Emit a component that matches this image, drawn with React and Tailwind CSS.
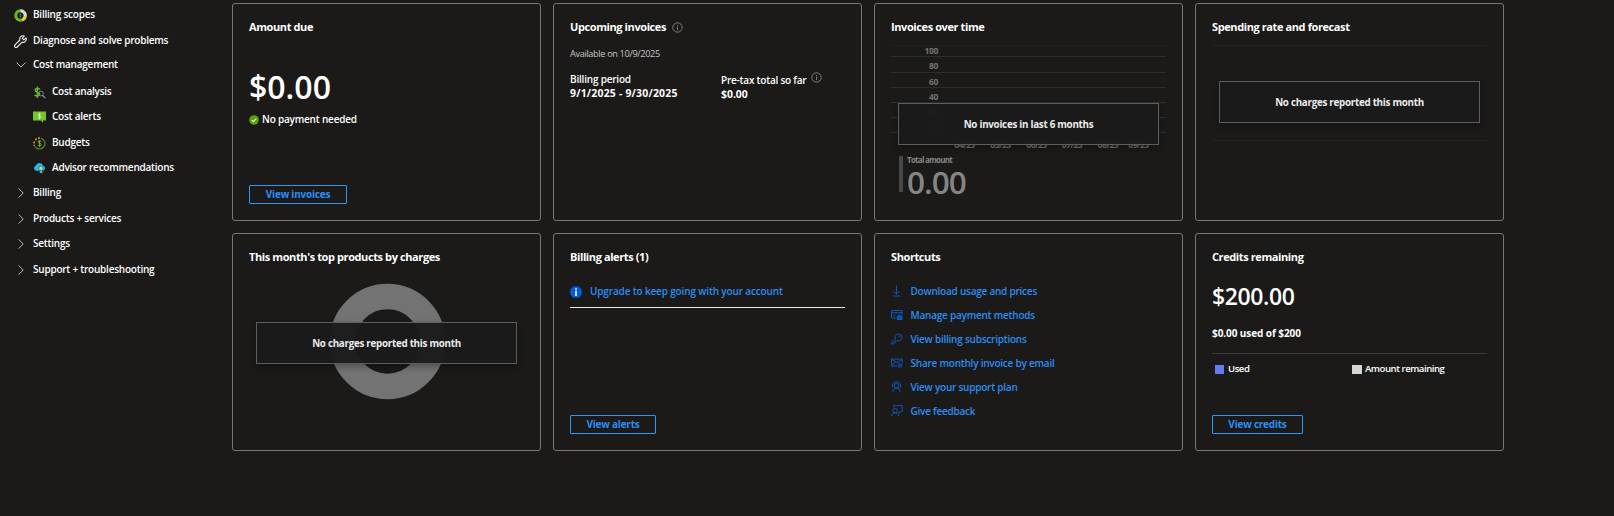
import React from "react";

const BillingScopesIcon = () => (
  <svg width="13" height="13" viewBox="0 0 13 13" fill="none">
    <circle cx="6.5" cy="6.5" r="4.7" stroke="#6bb52a" strokeWidth="3" />
    <path d="M6.5 1.8 A4.7 4.7 0 0 1 11.2 7.2" stroke="#d8d8d8" strokeWidth="3" />
    <path d="M11.2 7.2 A4.7 4.7 0 0 1 8.2 10.9" stroke="#f2d03b" strokeWidth="3" />
    <path d="M6.5 4.4v4.200" stroke="#2d7f8c" strokeWidth="1.300" />
  </svg>
);

const WrenchIcon = () => (
  <svg width="13" height="13" viewBox="0 0 13 13" fill="none" stroke="#ededed" strokeWidth="1.100" strokeLinejoin="round">
    <path d="M12 2.9 9.9 4.9 8.2 3.2 10.3 1.1C8.900 .5 7.400 .8 6.500 1.800 5.700 2.700 5.500 3.900 5.900 5L1 9.900C.4 10.600 .4 11.500 1 12.100 1.600 12.700 2.500 12.700 3.200 12L8.100 7.200C9.200 7.600 10.500 7.300 11.400 6.400 12.300 5.500 12.500 4.100 12 2.900Z" />
  </svg>
);

const ChevronDown = () => (
  <svg width="10" height="6" viewBox="0 0 10 6" fill="none" stroke="#b8b8b8" strokeWidth="1">
    <path d="M.6 .6 5 5 9.400 .6" />
  </svg>
);

const ChevronRight = () => (
  <svg width="6" height="10" viewBox="0 0 6 10" fill="none" stroke="#b8b8b8" strokeWidth="1">
    <path d="M.6 .4 5.200 5 .6 9.600" />
  </svg>
);

const CostAnalysisIcon = () => (
  <svg width="13" height="13" viewBox="0 0 13 13" fill="none">
    <path d="M6.800 3.400C6.300 2.300 2.300 1.800 2.100 4.100 2 6.300 6.800 5.600 6.600 8.200 6.400 10.400 2.400 10.300 1.600 8.800M4.400 .4V12" stroke="#6bb52a" strokeWidth="1.500" />
    <circle cx="7.900" cy="7.500" r="2.400" stroke="#808080" strokeWidth="1" />
    <path d="M9.600 9.300 12.300 12.200" stroke="#a0a0a0" strokeWidth="1.100" />
  </svg>
);

const CostAlertsIcon = () => (
  <svg width="13" height="12" viewBox="0 0 13 12" fill="none">
    <path d="M0 .5H13V9.500H10V11.700L7.800 9.500H0Z" fill="#76c42b" />
    <path d="M8 3.400C7.500 2.600 5.200 2.600 5.200 3.900 5.200 5.200 7.900 4.700 7.900 6.100 7.900 7.400 5.500 7.400 5 6.500M6.500 1.800V8.200" stroke="#eefbdc" strokeWidth=".8" />
  </svg>
);

const BudgetsIcon = () => (
  <svg width="13" height="13" viewBox="0 0 13 13" fill="none">
    <path d="M8 1.200A5.500 5.500 0 1 1 2 9.700" stroke="#5c8f2c" strokeWidth="1.100" />
    <path d="M8.100 4.600C7.500 3.500 5.100 3.700 5.100 5 5.100 6.500 8.200 6 8.200 7.700 8.200 9.100 5.400 9.100 4.900 7.900M6.600 3V9.900" stroke="#6bb52a" strokeWidth="1" />
    <g fill="#e8892b">
      <rect x="5" y=".2" width="1.800" height="1.800" />
      <rect x="2" y="1.500" width="1.800" height="1.800" />
      <rect x=".2" y="4.500" width="1.800" height="1.800" />
      <rect x=".5" y="7.700" width="1.500" height="1.500" />
    </g>
  </svg>
);

const AdvisorIcon = () => (
  <svg width="13" height="12" viewBox="0 0 13 12" fill="none">
    <path d="M3 8.800A2.700 2.700 0 0 1 2.700 3.700 3.900 3.900 0 0 1 10 3.500 2.800 2.800 0 0 1 10.200 8.800Z" fill="#30b5e8" />
    <circle cx="8" cy="6.300" r="2.800" fill="#1490df" />
    <circle cx="8" cy="6.200" r="1.700" fill="#f5cf3b" />
    <path d="M6.800 8.900H9.400V11.500L8.100 10.800 6.800 11.500Z" fill="#3fc7b5" />
  </svg>
);

function NavItem({ icon, label, className = "", child = false }) {
  return (
    <div className={`flex h-5 items-center ${child ? "pl-[33px]" : "pl-[14px]"} ${className}`}>
      <span className="mr-[6px] flex w-[13px] shrink-0 items-center justify-center">{icon}</span>
      <span className="self-start text-[10px] leading-[18px] tracking-[-0.23px]">{label}</span>
    </div>
  );
}

function InfoIcon() {
  return (
    <svg width="11" height="11" viewBox="0 0 11 11" fill="none" stroke="#8a8886" strokeWidth=".9">
      <circle cx="5.500" cy="5.500" r="4.700" />
      <path d="M5.500 4.700V8.200M5.500 2.900V3.900" />
    </svg>
  );
}

function Card({ title, extra, children }) {
  return (
    <section className="relative flex h-[218px] w-[309px] flex-col rounded-[3px] border border-[#797775] pt-[15px] pr-4 pb-4 pl-4">
      <h2 className="flex h-4 shrink-0 items-center text-[11px] leading-4 font-bold tracking-[-0.4px]">
        {title}
        {extra}
      </h2>
      {children}
    </section>
  );
}

function OutlineButton({ children, className }) {
  return (
    <button className={`mt-auto h-[19px] shrink-0 rounded-[1px] border border-[#2899f5] text-[10px] leading-[17px] font-bold tracking-[-0.22px] text-[#2b8ef2] ${className}`}>
      {children}
    </button>
  );
}

function EmptyNotice({ children, className }) {
  return (
    <div className={`absolute flex h-[42px] w-[261px] items-center justify-center border border-[#605e5c] bg-[#1b1b1b]/97 pt-[2px] text-[9.8px] font-bold tracking-[-0.27px] text-[#ececec] shadow-[0_3px_6px_rgba(0,0,0,0.3)] ${className}`}>
      {children}
    </div>
  );
}

const yTicks = [
  ["100", 7],
  ["80", 22],
  ["60", 38],
  ["40", 53],
  ["20", 68],
  ["0", 83],
];
const gridLines = [12, 28, 43, 58, 73, 88];
const months = [
  ["04/25", 73.5],
  ["05/25", 109.5],
  ["06/25", 145.5],
  ["07/25", 181],
  ["08/25", 217],
  ["09/25", 247.5],
];

function InvoiceChart() {
  return (
    <svg className="mt-[9px] shrink-0" width="275" height="106" viewBox="0 0 275 106">
      <rect x="0" y="1" width="275" height="1" fill="#232221" />
      {gridLines.map((y) => (
        <rect key={y} x="0" y={y} width="275" height="1" fill="#2e2d2c" />
      ))}
      <g fill="#757473" fontSize="8.5" fontWeight="700" letterSpacing="-.4">
        {yTicks.map(([t, y]) => (
          <text key={t} x="47" y={y + 3.2} textAnchor="end">{t}</text>
        ))}
        {months.map(([t, x]) => (
          <text key={t} x={x} y="104" textAnchor="middle" letterSpacing="-.5">{t}</text>
        ))}
      </g>
    </svg>
  );
}

const shortcutIcons = {
  download: <path d="M5.500 .3V9M2.300 6 5.500 9.200 8.700 6M2 11H9" />,
  payment: (
    <>
      <path d="M5.300 9H.5V1.500H11.200V5.500M.5 3.700H11.200M2.200 6.200H4.500" />
      <rect x="6.300" y="7.300" width="4.600" height="3.200" fill="#0a56b8" />
      <path d="M7.300 7.200V6.200H10V7.200" />
    </>
  ),
  key: (
    <>
      <path d="M4.600 6.300A3.500 3.500 0 1 1 6 7.600L5 8.600H3.900V9.700H2.800V11H.5V9.500L4.600 5.900" />
      <circle cx="8.500" cy="3.300" r=".5" />
    </>
  ),
  mail: (
    <>
      <path d="M6 9H.5V2H11.200V6M.5 2.300 5.900 5.700 11.200 2.300M.7 8.700 4 5" />
      <circle cx="8.900" cy="8.400" r="1.900" />
      <path d="M8 8.400H9.900" />
    </>
  ),
  support: (
    <>
      <circle cx="5.500" cy="4.600" r="2.300" />
      <path d="M1.600 6.500A4.200 4.200 0 1 1 9.500 6.200C9 7.300 8 7.300 6.700 7.300M1.700 11.300C2 8.900 3.700 7.200 5.500 7.200S9 8.900 9.400 11.300" />
    </>
  ),
  feedback: (
    <>
      <circle cx="4.100" cy="5.500" r="2.300" />
      <path d="M.5 11.300C.8 9 2.200 7.900 4.100 7.900S7.400 9 7.800 11.300M2.600 2V.6H11.200V6.600H9.900L8 8.500V6.600" />
    </>
  ),
};

function Shortcut({ icon, label }) {
  return (
    <a className="flex h-6 items-center text-[10px] leading-6 tracking-[-0.23px] text-[#2b8ef2]">
      <svg className="mr-[7.5px] -mt-px" width="12" height="12" viewBox="0 0 12 12" fill="none" stroke="#0d5bc0" strokeWidth=".95">
        {shortcutIcons[icon]}
      </svg>
      {label}
    </a>
  );
}

export default function App() {
  return (
    <div className="flex h-[516px] w-[1614px] overflow-hidden bg-[#1b1a19] font-['Open_Sans',sans-serif] font-[560] text-white">
      <nav className="flex w-[232px] shrink-0 flex-col">
        <NavItem className="mt-[5px]" icon={<BillingScopesIcon />} label="Billing scopes" />
        <NavItem className="mt-[6px]" icon={<WrenchIcon />} label="Diagnose and solve problems" />
        <NavItem className="mt-1" icon={<ChevronDown />} label="Cost management" />
        <NavItem child className="mt-[7px]" icon={<CostAnalysisIcon />} label="Cost analysis" />
        <NavItem child className="mt-[5px]" icon={<CostAlertsIcon />} label="Cost alerts" />
        <NavItem child className="mt-[6px]" icon={<BudgetsIcon />} label="Budgets" />
        <NavItem child className="mt-[5px]" icon={<AdvisorIcon />} label="Advisor recommendations" />
        <NavItem className="mt-[5px]" icon={<ChevronRight />} label="Billing" />
        <NavItem className="mt-[6px]" icon={<ChevronRight />} label="Products + services" />
        <NavItem className="mt-[5px]" icon={<ChevronRight />} label="Settings" />
        <NavItem className="mt-[6px]" icon={<ChevronRight />} label="Support + troubleshooting" />
      </nav>

      <main className="grid grid-cols-[repeat(4,309px)] content-start gap-3 pt-[3px]">
        <Card title="Amount due">
          <div className="mt-8 h-10 text-[32px] leading-10 font-semibold">$0.00</div>
          <div className="mt-1 flex h-4 items-center gap-[3px] text-[10px] leading-4 tracking-[-0.2px]">
            <svg className="mt-px" width="10" height="10" viewBox="0 0 10 10" fill="none">
              <circle cx="5" cy="5" r="4.800" fill="#57a300" />
              <path d="M2.800 5.100 4.400 6.700 7.300 3.700" stroke="#fff" strokeWidth="1.100" />
            </svg>
            No payment needed
          </div>
          <OutlineButton className="w-[98px]">View invoices</OutlineButton>
        </Card>

        <Card title="Upcoming invoices" extra={<span className="ml-[6px]"><InfoIcon /></span>}>
          <div className="mt-[11px] h-4 text-[9.2px] leading-4 font-normal tracking-[-0.36px] text-[#c8c6c4]">Available on 10/9/2025</div>
          <div className="mt-[10px] flex">
            <div className="w-[151px]">
              <div className="h-[14px] text-[10px] leading-[14px] tracking-[-0.2px]">Billing period</div>
              <div className="h-[14px] text-[10.4px] leading-[14px] font-bold tracking-[0.22px]">9/1/2025 - 9/30/2025</div>
            </div>
            <div className="pt-px">
              <div className="flex h-[14px] text-[10px] leading-[14px] tracking-[-0.22px]">
                Pre-tax total so far
                <span className="-mt-px ml-[5px]"><InfoIcon /></span>
              </div>
              <div className="h-[14px] text-[10.4px] leading-[14px] font-bold">$0.00</div>
            </div>
          </div>
        </Card>

        <Card title="Invoices over time">
          <InvoiceChart />
          <EmptyNotice className="top-[99px] left-[23px]">No invoices in last 6 months</EmptyNotice>
          <div className="mt-[6px] ml-2 flex h-9 gap-1">
            <div className="h-9 w-1 bg-[#484746]" />
            <div className="text-[#868584]">
              <div className="h-[7px] text-[8px] leading-[7px] font-bold tracking-[-0.75px]">Total amount</div>
              <div className="mt-[5px] h-7 text-[31.5px] leading-7 font-semibold tracking-[-1px]">0.00</div>
            </div>
          </div>
        </Card>

        <Card title="Spending rate and forecast">
          <div className="mt-[10px] h-24 border-y border-[#252423]" />
          <EmptyNotice className="top-[77px] left-[23px]">No charges reported this month</EmptyNotice>
        </Card>

        <Card title="This month's top products by charges">
          <svg className="mt-[18px] ml-[80px] shrink-0" width="117" height="117" viewBox="0 0 117 117" fill="none">
            <circle cx="58.500" cy="58.500" r="45" stroke="#737373" strokeWidth="25.500" />
          </svg>
          <EmptyNotice className="top-[88px] left-[23px]">No charges reported this month</EmptyNotice>
        </Card>

        <Card title="Billing alerts (1)">
          <a className="mt-[14px] flex h-[29px] items-start border-b border-[#edebe9] text-[10px] leading-6 tracking-[-0.15px] text-[#2b8ef2]">
            <svg className="mt-[7px] mr-2" width="12" height="12" viewBox="0 0 12 12">
              <circle cx="6" cy="6" r="6" fill="#015cda" />
              <path d="M5.200 4.800H6.800V10H5.200ZM5.200 2.200H6.800V3.800H5.200Z" fill="#fff" />
            </svg>
            Upgrade to keep going with your account
          </a>
          <OutlineButton className="w-[86px]">View alerts</OutlineButton>
        </Card>

        <Card title="Shortcuts">
          <div className="mt-[14px] flex flex-col">
            <Shortcut icon="download" label="Download usage and prices" />
            <Shortcut icon="payment" label="Manage payment methods" />
            <Shortcut icon="key" label="View billing subscriptions" />
            <Shortcut icon="mail" label="Share monthly invoice by email" />
            <Shortcut icon="support" label="View your support plan" />
            <Shortcut icon="feedback" label="Give feedback" />
          </div>
        </Card>

        <Card title="Credits remaining">
          <div className="mt-[15px] h-8 text-[23px] leading-8 font-semibold tracking-[-0.4px]">$200.00</div>
          <div className="mt-[13px] h-4 text-[10px] leading-4 font-bold tracking-[-0.08px]">$0.00 used of $200</div>
          <div className="mt-3 flex border-t border-[#3b3a39] pt-[7px] text-[9.6px] leading-4 tracking-[-0.48px]">
            <div className="flex w-[137px] items-center pl-[3px]">
              <span className="mt-px mr-1 h-[9px] w-[9px] bg-[#637cef]" />
              Used
            </div>
            <div className="flex items-center pl-[3px]">
              <span className="mt-px mr-[3px] h-[9px] w-[10px] bg-[#d6d6d6]" />
              Amount remaining
            </div>
          </div>
          <OutlineButton className="w-[91px]">View credits</OutlineButton>
        </Card>
      </main>
    </div>
  );
}
